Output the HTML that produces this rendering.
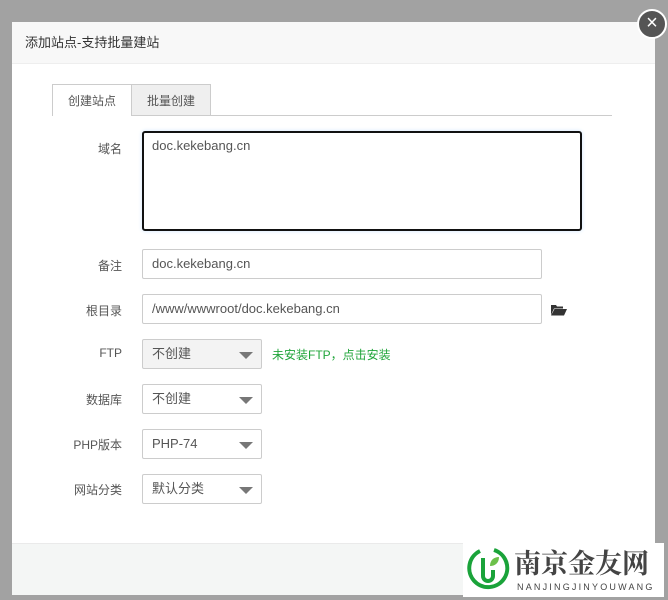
<!DOCTYPE html><html><head><meta charset="utf-8"><style>
body{margin:0;width:668px;height:600px;background:#a2a2a2;position:relative;overflow:hidden;font-family:"Liberation Sans","Noto Sans CJK SC",sans-serif;font-size:12px;color:#555}
.dlg{position:absolute;left:12px;top:22px;width:643px;height:573px;background:#fff}
.hd{height:41px;background:#f8f8f8;border-bottom:1px solid #eee;font-size:13px;color:#333;line-height:41px;padding-left:13px}
.ft{position:absolute;left:0;bottom:0;width:100%;height:51px;background:#f4f6f5;border-top:1px solid #eaeaea}
.ab{position:absolute}
.lbl{position:absolute;width:110px;text-align:right;left:0;font-size:12px;color:#555}
.in{position:absolute;left:142px;border:1px solid #ccc;border-radius:2px;box-sizing:border-box;padding-left:9px;font-size:13px;color:#555;background:#fff}
.sel{width:120px;height:30px;line-height:28px}
.sel:after{content:"";position:absolute;right:8px;top:12px;border-left:7px solid transparent;border-right:7px solid transparent;border-top:7px solid #777}
.tab{position:absolute;box-sizing:border-box;top:84px;height:32px;border:1px solid #ccc;border-bottom:none;text-align:center;line-height:32px;color:#555;white-space:nowrap}
</style></head><body>
<div class="dlg"><div class="hd">添加站点-支持批量建站</div><div class="ft"></div></div>
<div class="ab" style="left:53px;top:115px;width:559px;height:1px;background:#ccc"></div>
<div class="tab" style="left:52px;width:80px;background:#fff">创建站点</div>
<div class="tab" style="left:131px;width:80px;height:31px;background:#efefef">批量创建</div>
<div class="lbl" style="top:140px;left:12px">域名</div>
<div class="in" style="top:131px;width:440px;height:100px;border:2px solid #111;border-radius:3px;padding:5px 8px;box-shadow:0 0 4px #cfe6ff">doc.kekebang.cn</div>
<div class="lbl" style="top:257px;left:12px">备注</div>
<div class="in" style="top:249px;width:400px;height:30px;line-height:28px">doc.kekebang.cn</div>
<div class="lbl" style="top:302px;left:12px">根目录</div>
<div class="in" style="top:294px;width:400px;height:30px;line-height:28px">/www/wwwroot/doc.kekebang.cn</div>
<svg class="ab" style="left:551px;top:304px" width="16" height="12" viewBox="0 0 16 12"><path d="M0 1h5l1 1.5h6v2H3L0 11z" fill="#333"/><path d="M3.5 5H16l-3 6.5H0z" fill="#333"/></svg>
<div class="lbl" style="top:346px;left:12px">FTP</div>
<div class="in sel" style="top:339px;background:#f3f3f3">不创建</div>
<div class="ab" style="left:272px;top:346px;color:#20a53a">未安装FTP，点击安装</div>
<div class="lbl" style="top:391px;left:12px">数据库</div>
<div class="in sel" style="top:384px">不创建</div>
<div class="lbl" style="top:436px;left:12px">PHP版本</div>
<div class="in sel" style="top:429px">PHP-74</div>
<div class="lbl" style="top:481px;left:12px">网站分类</div>
<div class="in sel" style="top:474px">默认分类</div>
<div class="ab" style="left:637px;top:9px;width:26px;height:26px;border-radius:50%;background:#555;border:2px solid #fff;color:#fff;text-align:center;line-height:25px;font-size:20px">×</div>
<div class="ab" style="left:463px;top:543px;width:201px;height:54px;background:#fff"></div>
<svg class="ab" style="left:466px;top:546px" width="44" height="44" viewBox="0 0 44 44"><path d="M28 4A19 19 0 1 1 14 5" fill="none" stroke="#1aa33a" stroke-width="4"/><path d="M17 12v18a5 5 0 0 0 10 0v-6" fill="none" stroke="#1aa33a" stroke-width="4"/><path d="M24 20c0-6 4-9 9-9c0 6-4 9-9 9z" fill="#6cc04a"/></svg>
<div class="ab" style="left:514px;top:546px;font-family:'Noto Serif CJK SC',serif;font-weight:bold;font-size:27px;color:#444;white-space:nowrap;line-height:32px">南京金友网</div>
<div class="ab" style="left:517px;top:582px;font-size:9px;color:#444;letter-spacing:2.2px;white-space:nowrap">NANJINGJINYOUWANG</div>
</body></html>
